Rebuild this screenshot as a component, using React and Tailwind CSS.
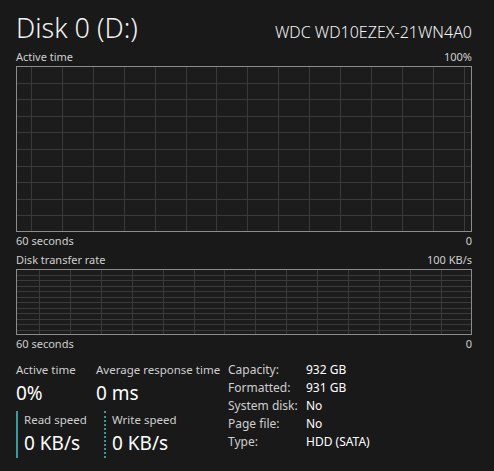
import React from "react";

const font = { fontFamily: "'Noto Sans', 'Open Sans', sans-serif" };

function Grid({ w, h, rows, offset, step }) {
  const hl = [];
  for (let i = 1; i < rows; i++) hl.push((h / rows) * i);
  const vl = [];
  for (let x = offset; x < w; x += step) vl.push(x);
  return (
    <svg width={w} height={h} className="block">
      <rect x="0" y="0" width={w} height={h} fill="#1c1c1c" />
      {hl.map((y) => (
        <line key={"h" + y} x1="0" x2={w} y1={Math.round(y) + 0.5} y2={Math.round(y) + 0.5} stroke="#3a3a3a" strokeWidth="1" />
      ))}
      {vl.map((x) => (
        <line key={"v" + x} x1={Math.round(x) + 0.5} x2={Math.round(x) + 0.5} y1="0" y2={h} stroke="#3a3a3a" strokeWidth="1" />
      ))}
      <rect x="0.5" y="0.5" width={w - 1} height={h - 1} fill="none" stroke="#8c8c8c" strokeWidth="1" />
    </svg>
  );
}

const props = [
  ["Capacity:", "932 GB"],
  ["Formatted:", "931 GB"],
  ["System disk:", "No"],
  ["Page file:", "No"],
  ["Type:", "HDD (SATA)"],
];

export default function App() {
  return (
    <div className="w-[494px] h-[471px] bg-[#191919] text-white pl-4 pr-[22px] overflow-hidden" style={font}>
      {/* header */}
      <div className="flex items-end justify-between h-[46px] pb-[5px]">
        <div className="text-[27px] font-light leading-none text-[#f2f2f2]">Disk 0 (D:)</div>
        <div className="text-[16px] font-light leading-none text-[#f2f2f2] pb-[1px]">WDC WD10EZEX-21WN4A0</div>
      </div>

      <div className="flex items-end justify-between text-[11px] leading-[18px] text-[#cfcfcf] h-[20px]">
        <span>Active time</span>
        <span>100%</span>
      </div>
      <Grid w={456} h={166} rows={10} offset={15} step={30.9} />
      <div className="flex justify-between text-[11px] leading-[18px] text-[#cfcfcf] h-[18px]">
        <span>60 seconds</span>
        <span>0</span>
      </div>

      <div className="flex items-end justify-between text-[11px] leading-[18px] text-[#cfcfcf] h-[19px]">
        <span>Disk transfer rate</span>
        <span>100 KB/s</span>
      </div>
      <Grid w={456} h={66} rows={12} offset={23} step={30.9} />
      <div className="flex justify-between text-[11px] leading-[18px] text-[#cfcfcf] h-[22px]">
        <span>60 seconds</span>
        <span>0</span>
      </div>

      {/* stats */}
      <div className="flex mt-[5px]">
        <div className="w-[212px]">
          <div className="flex">
            <div className="w-[80px]">
              <div className="text-[11.5px] leading-[16px] text-[#cfcfcf]">Active time</div>
              <div className="text-[19px] leading-[26px] mt-[2px] text-white">0%</div>
            </div>
            <div>
              <div className="text-[11.5px] leading-[16px] text-[#cfcfcf] whitespace-nowrap">Average response time</div>
              <div className="text-[19px] leading-[26px] mt-[2px] text-white">0 ms</div>
            </div>
          </div>
          <div className="flex mt-[5px]">
            <div className="w-[88px] pl-[6px] border-l-2 border-[#3e9a9a] pt-[1px] pb-[2px]">
              <div className="text-[11.5px] leading-[16px] text-[#cfcfcf]">Read speed</div>
              <div className="text-[19px] leading-[26px] mt-[2px] text-white">0 KB/s</div>
            </div>
            <div className="pl-[6px] border-l-2 border-dotted border-[#3e9a9a] pt-[1px] pb-[2px]">
              <div className="text-[11.5px] leading-[16px] text-[#cfcfcf]">Write speed</div>
              <div className="text-[19px] leading-[26px] mt-[2px] text-white">0 KB/s</div>
            </div>
          </div>
        </div>
        <div className="flex flex-col -mt-[1px]">
          {props.map(([k, v]) => (
            <div key={k} className="flex text-[12px] leading-[18px]">
              <span className="w-[78px] text-[#cfcfcf]">{k}</span>
              <span className="text-white">{v}</span>
            </div>
          ))}
        </div>
      </div>
    </div>
  );
}
